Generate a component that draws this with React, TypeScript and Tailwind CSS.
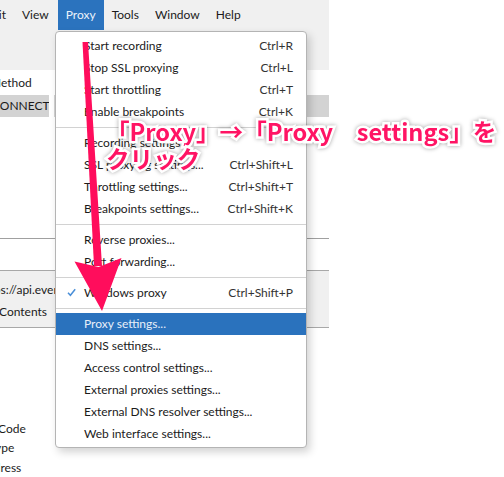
import React from "react";

type Item =
  | { kind: "item"; label: string; shortcut?: string; checked?: boolean; active?: boolean }
  | { kind: "sep" };

const items: Item[] = [
  { kind: "item", label: "Start recording", shortcut: "Ctrl+R" },
  { kind: "item", label: "Stop SSL proxying", shortcut: "Ctrl+L" },
  { kind: "item", label: "Start throttling", shortcut: "Ctrl+T" },
  { kind: "item", label: "Enable breakpoints", shortcut: "Ctrl+K" },
  { kind: "sep" },
  { kind: "item", label: "Recording settings..." },
  { kind: "item", label: "SSL proxying settings...", shortcut: "Ctrl+Shift+L" },
  { kind: "item", label: "Throttling settings...", shortcut: "Ctrl+Shift+T" },
  { kind: "item", label: "Breakpoints settings...", shortcut: "Ctrl+Shift+K" },
  { kind: "sep" },
  { kind: "item", label: "Reverse proxies..." },
  { kind: "item", label: "Port forwarding..." },
  { kind: "sep" },
  { kind: "item", label: "Windows proxy", shortcut: "Ctrl+Shift+P", checked: true },
  { kind: "sep" },
  { kind: "item", label: "Proxy settings...", active: true },
  { kind: "item", label: "DNS settings..." },
  { kind: "item", label: "Access control settings..." },
  { kind: "item", label: "External proxies settings..." },
  { kind: "item", label: "External DNS resolver settings..." },
  { kind: "item", label: "Web interface settings..." },
];

function MenuBar() {
  return (
    <div className="h-[30px] bg-[#f0f0f0] flex items-stretch shrink-0">
      <div className="w-[14px] flex justify-end items-center overflow-hidden">
        <span className="pr-[8px] shrink-0">Edit</span>
      </div>
      <div className="px-[8px] flex items-center">View</div>
      <div className="px-[8px] ml-px flex items-center bg-[#2b73be] text-[#eaf1fa]">Proxy</div>
      <div className="px-[8px] flex items-center">Tools</div>
      <div className="px-[8px] flex items-center">Window</div>
      <div className="px-[8px] flex items-center">Help</div>
    </div>
  );
}

function Menu() {
  return (
    <div className="absolute left-[55px] top-[31px] w-[252px] bg-white border border-[#b4b4b4] rounded-[4px] pt-[3px] pb-[2px] shadow-[3px_4px_9px_rgba(0,0,0,0.18)]">
      {items.map((it, i) =>
        it.kind === "sep" ? (
          <div key={i} className="h-[9px] flex items-center">
            <div className="h-px w-full bg-[#d2d2d2]" />
          </div>
        ) : (
          <div
            key={i}
            className={
              "relative h-[22px] flex items-center justify-between pl-[28px] pr-[13px] " +
              (it.active ? "bg-[#2a72bd] text-[#e8eff9]" : "text-[#1b1b1b]")
            }
          >
            {it.checked && (
              <svg className="absolute left-[11px] top-[6px]" width="9" height="9" viewBox="0 0 9 9">
                <path d="M1 4.8 L3.4 7.3 L8.2 1.2" fill="none" stroke="#4a8fd8" strokeWidth="1.5" />
              </svg>
            )}
            <span>{it.label}</span>
            {it.shortcut && <span className="text-[#333]">{it.shortcut}</span>}
          </div>
        )
      )}
    </div>
  );
}

function Arrow() {
  return (
    <svg className="absolute left-0 top-0 pointer-events-none" width="504" height="477" viewBox="0 0 504 477">
      <polygon points="82.5,42 88,42 102,266 94,266" fill="#ff0d5c" />
      <polygon points="74.5,261.5 98.5,267 121.5,258 102,311" fill="#ff0d5c" />
    </svg>
  );
}

function Annotation() {
  return (
    <div className="absolute left-[106px] top-[118px] text-[23.6px] leading-[27px] font-bold text-[#ff1464] font-['Noto_Sans_CJK_JP','Noto_Sans',sans-serif] whitespace-nowrap [-webkit-text-stroke:5px_white] [paint-order:stroke_fill] drop-shadow-[0_0_2px_rgba(0,0,0,0.35)]">
      <div>「Proxy」→「Proxy　settings」を</div>
      <div>クリック</div>
    </div>
  );
}

export default function App() {
  return (
    <div className="relative w-[504px] h-[477px] bg-white overflow-hidden font-['Lato','Liberation_Sans',sans-serif] text-[12px] text-[#1b1b1b]">
      <div className="w-[329px] h-full flex flex-col">
        <MenuBar />
        <div className="h-[40px] bg-[#f0f0f0] shrink-0" />
        <div className="h-[25px] flex items-center shrink-0 overflow-hidden">
          <span className="-ml-[10px]">Method</span>
        </div>
        <div className="h-[22px] flex shrink-0">
          <div className="w-[49px] bg-[#d3d3d3] flex items-center overflow-hidden">
            <span className="-ml-[8px]">CONNECT</span>
          </div>
          <div className="w-[5px]" />
          <div className="flex-1 bg-[#d3d3d3]" />
        </div>
        <div className="h-[121px] shrink-0" />
        <div className="h-[32px] border-t border-[#a0a0a0] shrink-0" />
        <div className="h-[58px] border-y border-[#a8a8a8] bg-[#f0f0f0] flex flex-col pt-[8px] shrink-0 overflow-hidden">
          <div className="h-[22px] flex items-center">
            <span className="-ml-[21px] whitespace-nowrap">https://api.evernote.com</span>
          </div>
          <div className="h-[22px] flex items-center">
            <span className="-ml-[1px]">Contents</span>
          </div>
        </div>
        <div className="h-[91px] shrink-0" />
        <div className="flex flex-col overflow-hidden">
          <div className="h-[22px] flex items-center">
            <span className="-ml-[2px]">Code</span>
          </div>
          <div className="h-[22px] flex items-center">
            <span className="-ml-[11px]">Type</span>
          </div>
          <div className="h-[21px] flex items-center">
            <span className="-ml-[21px]">Address</span>
          </div>
        </div>
      </div>
      <Menu />
      <Annotation />
      <Arrow />
    </div>
  );
}
